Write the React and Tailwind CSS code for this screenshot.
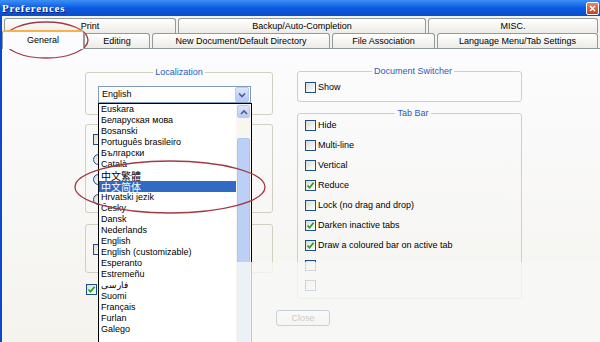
import React from "react";

const topTabs = [
  { label: "Print", cls: "w-[172px]" },
  { label: "Backup/Auto-Completion", cls: "w-[248px]" },
  { label: "MISC.", cls: "w-[170px]" },
];

const frontTabs = [
  { label: "Editing", cls: "w-[66px]" },
  { label: "New Document/Default Directory", cls: "w-[178px]" },
  { label: "File Association", cls: "w-[103px]" },
  { label: "Language Menu/Tab Settings", cls: "w-[161px]" },
];

const languages = [
  "Euskara",
  "Беларуская мова",
  "Bosanski",
  "Português brasileiro",
  "Български",
  "Català",
  "中文繁體",
  "中文简体",
  "Hrvatski jezik",
  "Česky",
  "Dansk",
  "Nederlands",
  "English",
  "English (customizable)",
  "Esperanto",
  "Estremeñu",
  "فارسی",
  "Suomi",
  "Français",
  "Furlan",
  "Galego",
];

const tabBarOptions = [
  { label: "Hide", checked: false },
  { label: "Multi-line", checked: false },
  { label: "Vertical", checked: false },
  { label: "Reduce", checked: true },
  { label: "Lock (no drag and drop)", checked: false },
  { label: "Darken inactive tabs", checked: true },
  { label: "Draw a coloured bar on active tab", checked: true },
  { label: "", checked: false },
  { label: "", checked: false },
];

function Box({ checked }) {
  return (
    <span className="w-[11px] h-[11px] shrink-0 border border-[#1c5180] bg-gradient-to-br from-[#dcdcd5] to-white flex items-center justify-center">
      {checked && (
        <svg width="9" height="9" viewBox="0 0 9 9">
          <polyline
            points="1.5,4.5 3.5,6.7 7.6,1.8"
            fill="none"
            stroke="#21a121"
            strokeWidth="1.7"
          />
        </svg>
      )}
    </span>
  );
}

function Radio() {
  return (
    <span className="w-[11px] h-[11px] shrink-0 rounded-full border border-[#1c5180] bg-gradient-to-br from-[#dcdcd5] to-white" />
  );
}

function Chevron({ up = false }) {
  return (
    <svg width="8" height="6" viewBox="0 0 8 6">
      <polyline
        points={up ? "1,5 4,2 7,5" : "1,1.5 4,4.5 7,1.5"}
        fill="none"
        stroke="#4d6185"
        strokeWidth="1.7"
      />
    </svg>
  );
}

export default function App() {
  return (
    <div className="relative w-[600px] h-[342px] overflow-hidden flex flex-col bg-[#f4f3ee] font-['Liberation_Sans',Arial,sans-serif] text-[9px] leading-[11px] text-black">
      {/* title bar */}
      <div className="h-[16px] shrink-0 flex items-center justify-between pl-[2px] pr-[1px] bg-gradient-to-b from-[#3d8ff7] via-[#0a5ae2] to-[#0a4ccc]">
        <span className="font-['Liberation_Serif',serif] font-bold text-[11px] leading-[12px] tracking-[0.8px] text-white [text-shadow:1px_1px_#0a1e6e]">
          Preferences
        </span>
        <span className="w-[13px] h-[13px] rounded-[2px] border border-white bg-gradient-to-b from-[#ea8463] to-[#c63e1b] flex items-center justify-center">
          <svg width="7" height="7" viewBox="0 0 7 7">
            <path d="M1 1 L6 6 M6 1 L1 6" stroke="white" strokeWidth="1.6" />
          </svg>
        </span>
      </div>

      <div className="flex-1 flex flex-col border-l-2 border-[#0b47cf]">
        {/* tab rows */}
        <div className="flex gap-[2px] pl-[2px] mt-[2px] h-[15px]">
          {topTabs.map((t) => (
            <div
              key={t.label}
              className={`${t.cls} h-[15px] flex items-center justify-center border border-b-0 border-[#919b9c] rounded-t-[3px] bg-gradient-to-b from-white to-[#ecebe6]`}
            >
              {t.label}
            </div>
          ))}
        </div>
        <div className="flex items-end gap-[2px] pl-[2px] h-[15px]">
          <div className="relative z-10 -ml-[2px] -mr-[2px] -mb-px w-[82px] h-[19px] flex items-center justify-center border border-b-0 border-[#919b9c] border-t-2 border-t-[#f6b24c] rounded-t-[3px] bg-[#fcfcfe]">
            General
          </div>
          {frontTabs.map((t) => (
            <div
              key={t.label}
              className={`${t.cls} h-[15px] flex items-center justify-center border border-b-0 border-[#919b9c] rounded-t-[3px] bg-gradient-to-b from-white to-[#ecebe6]`}
            >
              {t.label}
            </div>
          ))}
        </div>

        {/* tab page */}
        <div className="flex-1 border-t border-[#919b9c] bg-gradient-to-b from-[#fcfcfe] to-[#f4f3ee] pl-[83px] pt-[17px]">
          <div className="flex items-start">
            {/* left column */}
            <div className="w-[188px] mt-px flex flex-col">
              <fieldset className="border border-[#d0d0bf] rounded-[3px] px-[12px] pb-[11px]">
                <legend className="mx-auto px-[2px] text-[9px] leading-[10px] text-[#2a5bc0]">
                  Localization
                </legend>
                <div className="mt-[9px] w-[153px] h-[17px] border border-[#7f9db9] bg-white flex items-center justify-between pl-[3px] pr-px">
                  <span>English</span>
                  <span className="w-[14px] h-[15px] rounded-[2px] border border-[#b9cbf3] bg-gradient-to-b from-[#dbe5fd] to-[#b4c7f5] flex items-center justify-center">
                    <Chevron />
                  </span>
                </div>
              </fieldset>

              <div className="mt-[9px] h-[89px] border border-[#d0d0bf] rounded-[3px] pl-[7px] pt-[9px] flex flex-col">
                <Box />
                <div className="mt-[9px] flex flex-col gap-[9px]">
                  <Radio />
                  <Radio />
                  <Radio />
                </div>
              </div>

              <div className="mt-[11px] h-[49px] border border-[#d0d0bf] rounded-[3px] pl-[7px] pt-[19px]">
                <Box />
              </div>

              <div className="mt-[11px] ml-px flex items-center">
                <Box checked />
              </div>
            </div>

            {/* right column */}
            <div className="ml-[24px] w-[225px] flex flex-col">
              <fieldset className="border border-[#d0d0bf] rounded-[3px] pl-[7px] pb-[8px]">
                <legend className="mx-auto px-[2px] text-[9px] leading-[10px] text-[#2a5bc0]">
                  Document Switcher
                </legend>
                <div className="mt-[6px] flex items-center gap-[2px]">
                  <Box />
                  <span>Show</span>
                </div>
              </fieldset>

              <fieldset className="mt-[6px] border border-[#d0d0bf] rounded-[3px] pl-[7px] pb-[7px]">
                <legend className="mx-auto px-[2px] text-[9px] leading-[10px] text-[#2a5bc0]">
                  Tab Bar
                </legend>
                <div className="mt-[2px] flex flex-col gap-[9px]">
                  {tabBarOptions.map((o, i) => (
                    <div key={i} className="flex items-center gap-[2px] h-[11px]">
                      <Box checked={o.checked} />
                      <span>{o.label}</span>
                    </div>
                  ))}
                </div>
              </fieldset>
            </div>
          </div>

          <div className="mt-[11px] ml-[191px] w-[54px] h-[16px] rounded-[3px] border border-[#003c74] bg-gradient-to-b from-white to-[#ecebe6] flex items-center justify-center">
            Close
          </div>
        </div>
      </div>

      {/* dropped-down language list */}
      <div className="absolute left-[98px] top-[103px] w-[154px] h-[260px] border border-black bg-white flex">
        <div className="w-[137px] flex flex-col">
          {languages.map((lang) => (
            <div
              key={lang}
              className={`h-[11px] leading-[11px] pl-[2px] whitespace-nowrap ${
                lang === "中文简体" ? "bg-[#316ac5] text-white" : ""
              } ${
                lang.startsWith("中文")
                  ? "font-['Noto_Sans_CJK_SC',sans-serif] text-[10px]"
                  : ""
              }`}
            >
              {lang}
            </div>
          ))}
        </div>
        <div className="w-[15px] bg-[#f7f6f0] flex flex-col items-center pt-px">
          <span className="w-[13px] h-[13px] rounded-[2px] border border-[#b9cbf3] bg-gradient-to-b from-[#dbe5fd] to-[#b8cbf6] flex items-center justify-center">
            <Chevron up />
          </span>
          <span className="mt-[20px] w-[13px] flex-1 rounded-[2px] border border-[#adc3f2] bg-[#bccff7]" />
        </div>
      </div>

      {/* washed-out lower right */}
      <div className="absolute left-[237px] top-[262px] right-0 bottom-0 bg-[#f8f8f6]/80" />

      {/* red annotation rings */}
      <svg
        className="absolute inset-0 pointer-events-none"
        width="600"
        height="342"
        viewBox="0 0 600 342"
      >
        <ellipse cx="46" cy="40" rx="42" ry="18" fill="none" stroke="#a23a46" strokeWidth="1.3" />
        <ellipse cx="170" cy="187" rx="95" ry="26" fill="none" stroke="#a23a46" strokeWidth="1.3" />
      </svg>
    </div>
  );
}
